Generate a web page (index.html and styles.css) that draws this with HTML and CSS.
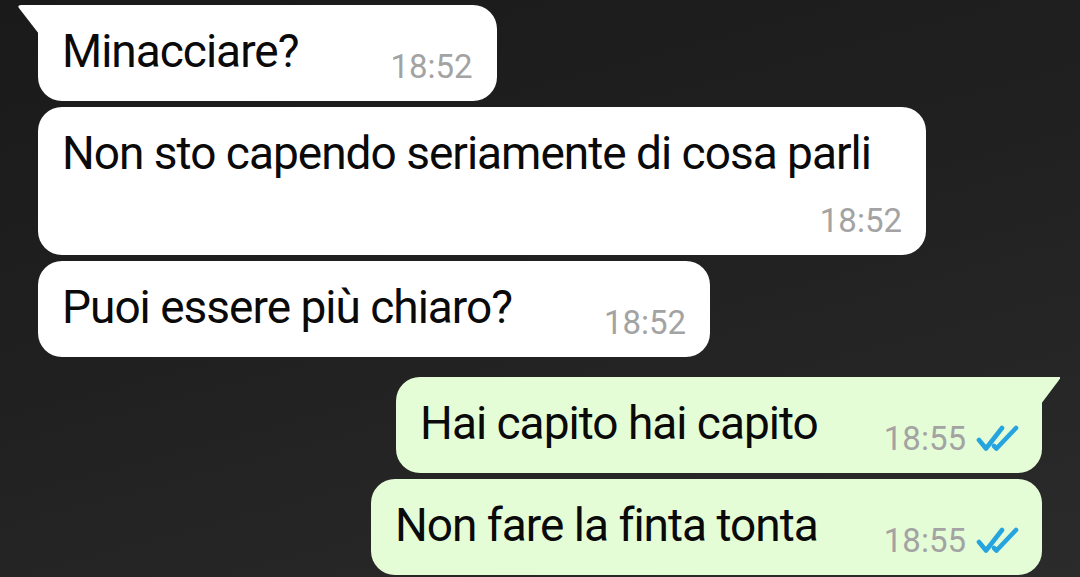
FILE: index.html
```html
<!DOCTYPE html>
<html lang="it">
<head>
    <meta charset="UTF-8">
    <meta name="viewport" content="width=device-width, initial-scale=1.0">
    <title>Chat</title>
    <link rel="stylesheet" href="styles.css">
</head>
<body>
    <!-- conversazione -->
    <div class="chat">
        <div class="msg in first">
            <span class="text">Minacciare?</span>
            <span class="meta"><span class="time">18:52</span></span>
        </div>
        <div class="msg in">
            <span class="text">Non sto capendo seriamente di cosa parli</span>
            <span class="meta"><span class="time">18:52</span></span>
        </div>
        <div class="msg in">
            <span class="text">Puoi essere più chiaro?</span>
            <span class="meta"><span class="time">18:52</span></span>
        </div>

        <div class="msg out first">
            <span class="text">Hai capito hai capito</span>
            <span class="meta">
                <span class="time">18:55</span>
                <svg class="ticks" viewBox="0 0 44 26" width="44" height="26">
                    <path d="M3 15 L10 23.5 L26 3" />
                    <path d="M18 21 L20.5 23.5 L40 3" />
                </svg>
            </span>
        </div>
        <div class="msg out">
            <span class="text">Non fare la finta tonta</span>
            <span class="meta">
                <span class="time">18:55</span>
                <svg class="ticks" viewBox="0 0 44 26" width="44" height="26">
                    <path d="M3 15 L10 23.5 L26 3" />
                    <path d="M18 21 L20.5 23.5 L40 3" />
                </svg>
            </span>
        </div>
    </div>
</body>
</html>
```

FILE: styles.css
```css
html, body {
    height: 100%;
}
body {
    margin: 0;
    background: linear-gradient(165deg, #1a1a1a 0%, #202020 45%, #2b2b2b 100%);
    font-family: Roboto, "Noto Sans", sans-serif;
    overflow: hidden;
}
.chat {
    display: flex;
    flex-direction: column;
    gap: 6px;
    padding: 5px 38px 0 38px;
}
.msg {
    position: relative;
    display: flex;
    flex-wrap: wrap;
    align-items: flex-start;
    max-width: 840px;
    padding: 20px 24px 18px 24px;
    border-radius: 24px;
    color: #0a0a0a;
}
.msg .text {
    font-size: 46px;
    line-height: 52px;
    letter-spacing: -1px;
    white-space: nowrap;
}
.msg .meta {
    display: flex;
    align-items: center;
    margin-left: auto;
    margin-top: 26px;
    height: 32px;
}
.time {
    font-size: 33px;
    line-height: 32px;
    color: #a3a3a3;
}
.ticks {
    margin-left: 10px;
    margin-top: -3px;
}
.ticks path {
    fill: none;
    stroke: #25a4df;
    stroke-width: 4.6;
    stroke-linecap: round;
    stroke-linejoin: round;
}

/* messaggi ricevuti */
.in {
    align-self: flex-start;
    background: #ffffff;
    column-gap: 92px;
}
/* messaggi inviati */
.out {
    align-self: flex-end;
    background: #e5fdd7;
    column-gap: 66px;
    padding-right: 22px;
}
.out.first {
    margin-top: 14px;
}

/* codina della nuvoletta */
.in.first {
    border-top-left-radius: 0;
}
.in.first::before {
    content: "";
    position: absolute;
    top: 0;
    left: -20px;
    width: 21px;
    height: 29px;
    background: #ffffff;
    clip-path: polygon(0 0, 100% 0, 100% 100%, 8% 14%, 0 5%);
    border-top-left-radius: 3px;
}
.out.first {
    border-top-right-radius: 0;
}
.out.first::before {
    content: "";
    position: absolute;
    top: 0;
    right: -18px;
    width: 19px;
    height: 27px;
    background: #e5fdd7;
    clip-path: polygon(0 0, 100% 0, 100% 5%, 92% 14%, 0 100%);
}
```
